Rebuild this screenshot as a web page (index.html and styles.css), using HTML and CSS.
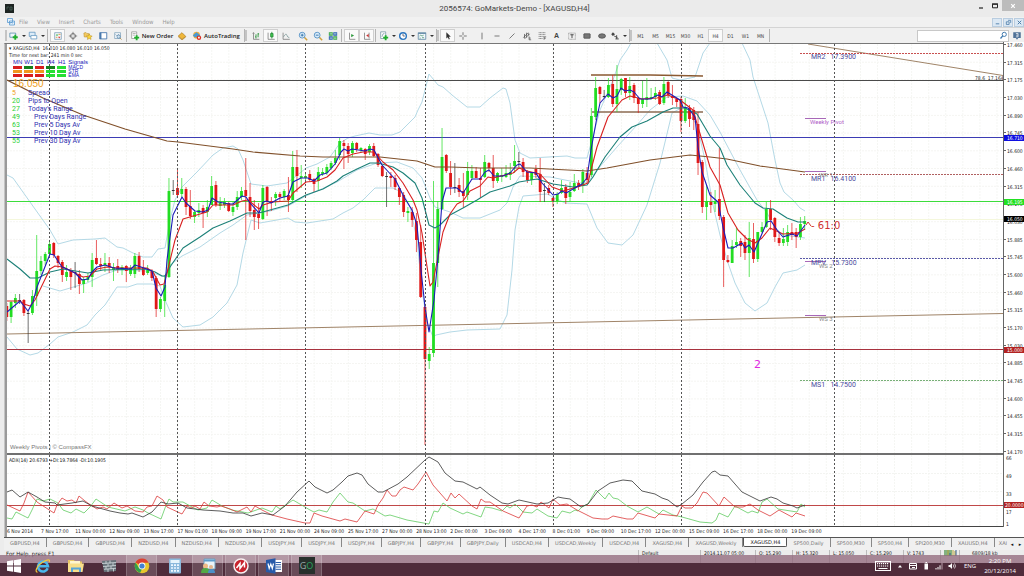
FILE: index.html
```html
<!DOCTYPE html>
<html lang="en">
<head>
<meta charset="utf-8">
<title>2056574: GoMarkets-Demo - [XAGUSD,H4]</title>
<link rel="stylesheet" href="styles.css">
</head>
<body>
<header class="titlebar">
  <svg class="app-icon" viewBox="0 0 9 9"><rect width="9" height="9" fill="#1d2422"/><path d="M2 5.500V3h2M5 3h2v3H5z" stroke="#4d6b60" stroke-width=".7" fill="none"/></svg>
  <h1 class="title">2056574: GoMarkets-Demo - [XAGUSD,H4]</h1>
  <div class="window-controls">
    <button class="win" aria-label="Minimize"><svg viewBox="0 0 8 8"><path d="M2 6h4" stroke="#222" stroke-width="1.200"/></svg></button>
    <button class="win" aria-label="Maximize"><svg viewBox="0 0 8 8"><path d="M1.500 2.200h5v3.600h-5z" stroke="#222" fill="none"/><path d="M1 2h6" stroke="#222" stroke-width="1.200"/></svg></button>
    <button class="win win-close" aria-label="Close"><svg viewBox="0 0 8 8"><path d="M2.200 2.200l3.600 3.600M5.800 2.200L2.200 5.800" stroke="#fff" stroke-width="1.200"/></svg></button>
  </div>
</header>

<nav class="menubar">
  <svg class="menu-icon" viewBox="0 0 8 8"><path d="M.5.500h5v4h-5zM2.500 3h5v4h-5z" fill="#e7f2fb" stroke="#5b9bd0" stroke-width=".8"/><path d="M3.500 5.500l1-1 1 .8 1-1" stroke="#5b9bd0" stroke-width=".6" fill="none"/></svg>
  <button class="menu">File</button><button class="menu">View</button><button class="menu">Insert</button><button class="menu">Charts</button><button class="menu">Tools</button><button class="menu">Window</button><button class="menu">Help</button>
  <div class="child-controls">
    <button class="child" aria-label="Minimize chart"><svg viewBox="0 0 8 8"><path d="M2 5.500h4" stroke="#4a7ba8"/></svg></button>
    <button class="child" aria-label="Restore chart"><svg viewBox="0 0 8 8"><path d="M3.500 1.500h3v3M1.500 3.200h3.200v3H1.500z" stroke="#4a7ba8" fill="none" stroke-width=".9"/></svg></button>
    <button class="child" aria-label="Close chart"><svg viewBox="0 0 8 8"><path d="M2 2l4 4M6 2L2 6" stroke="#4a7ba8" stroke-width="1.100"/></svg></button>
  </div>
</nav>

<div class="toolbar" role="toolbar">
  <span class="grip"></span>
  <button class="tool drop" aria-label="New chart"><svg viewBox="0 0 12 12"><path d="M1 2.500h7v5H1z" fill="#eef6fb" stroke="#4f86a8" stroke-width=".9"/><path d="M7.500 4.500v6M4.500 7.500h6" stroke="#1fae2c" stroke-width="2.200"/></svg></button>
  <button class="tool drop" aria-label="Profiles"><svg viewBox="0 0 12 12"><path d="M1.500 1.500h7v5h-7z" fill="#dcecf8" stroke="#5e95c0" stroke-width=".9"/><path d="M3.500 5.500h7v4h-7z" fill="#fff" stroke="#5e95c0" stroke-width=".9"/></svg></button>
  <span class="sep"></span>
  <button class="tool on" aria-label="Market Watch"><svg viewBox="0 0 12 12"><path d="M2 2h8v8H2z" fill="#f4f9fc" stroke="#6c93ad" stroke-width=".8"/><path d="M3.300 5.500l1.500-2 1.500 2z" fill="#1fae2c"/><path d="M6 7l1.500 2L9 7z" fill="#d33"/><path d="M6.500 4h2.500M3.300 7.500h2" stroke="#d88a2a"/></svg></button>
  <button class="tool" aria-label="Data Window"><svg viewBox="0 0 12 12"><circle cx="6" cy="6" r="3" fill="none" stroke="#666"/><path d="M6 1v4M6 7v4M1 6h4M7 6h4" stroke="#666" stroke-width=".9"/></svg></button>
  <button class="tool" aria-label="Navigator"><svg viewBox="0 0 12 12"><path d="M1 2.500l2.500-.8 1 1.200 3 .3v4H1.500z" fill="#f2c860" stroke="#b58a28" stroke-width=".6"/><path d="M7.500 3.500l1.100 2.200 2.400.3-1.700 1.700.4 2.400-2.200-1.100-2.200 1.100.4-2.400L4 6l2.400-.3z" fill="#fbd53b" stroke="#b58a28" stroke-width=".6"/></svg></button>
  <button class="tool" aria-label="Terminal"><svg viewBox="0 0 12 12"><path d="M2 2h8.500v7.500H2z" fill="#fff" stroke="#3d70a8"/><path d="M3.300 2v7.500" stroke="#3d70a8" stroke-width="1.600"/></svg></button>
  <button class="tool" aria-label="Strategy Tester"><svg viewBox="0 0 12 12"><path d="M2 2h7v7H2z" fill="#f5f9fc" stroke="#7298b3" stroke-width=".8"/><path d="M3 4l2 2 1.500-2L8 5.500" stroke="#5882a5" stroke-width=".7" fill="none"/><circle cx="6.800" cy="6.800" r="2" fill="#cfe3f2" stroke="#5882a5" stroke-width=".8"/><path d="M8.300 8.300l2 2" stroke="#b08b4a"/></svg></button>
  <span class="sep"></span>
  <button class="tool wide"><svg viewBox="0 0 12 12"><path d="M2 1h6v8H2z" fill="#fff" stroke="#888" stroke-width=".8"/><path d="M3.300 3h3.500M3.300 5h3" stroke="#888" stroke-width=".7"/><path d="M8 5v6M5 8h6" stroke="#1fae2c" stroke-width="2.200"/></svg>New Order</button>
  <button class="tool" aria-label="MetaEditor"><svg viewBox="0 0 12 12"><path d="M1.500 6L6 2l4.500 4.500L6 10z" fill="#f0b73a" stroke="#a87412" stroke-width=".8"/><path d="M1.500 7L6 10.700l4.500-3.500" stroke="#a87412" fill="none" stroke-width=".7"/></svg></button>
  <button class="tool wide auto"><svg viewBox="0 0 12 12"><circle cx="5.500" cy="5" r="4" fill="#f0b040"/><path d="M1 5l4.500-3.500L10 5l-2 2.500H3z" fill="#4a9ad0"/><circle cx="8.300" cy="8" r="2.700" fill="#dd2f22"/><path d="M7.300 7h2v2h-2z" fill="#fff"/></svg>AutoTrading</button>
  <span class="sep"></span><span class="grip"></span>
  <button class="tool" aria-label="Bar chart"><svg viewBox="0 0 12 12"><path d="M3 2v8h7M2 3l1-1 1 1" stroke="#666" fill="none" stroke-width=".8"/><path d="M6 4v5M8.500 2.500v5M5 7h1M8.500 3.500h1.200" stroke="#1d8d2e"/></svg></button>
  <button class="tool on" aria-label="Candlesticks"><svg viewBox="0 0 12 12"><path d="M2.500 2v8h8" stroke="#666" fill="none" stroke-width=".8"/><path d="M7 1v8" stroke="#1d8d2e"/><path d="M5.500 3h3v4h-3z" fill="#3fc64f" stroke="#1d7d2e" stroke-width=".8"/></svg></button>
  <button class="tool" aria-label="Line chart"><svg viewBox="0 0 12 12"><path d="M2.500 2v8h8" stroke="#666" fill="none" stroke-width=".8"/><path d="M3 7q3-5 4-2t3 3" stroke="#688" fill="none" stroke-width=".8"/></svg></button>
  <span class="space"></span>
  <button class="tool" aria-label="Zoom in"><svg viewBox="0 0 12 12"><path d="M7 7l4 4" stroke="#d0a13c" stroke-width="1.800"/><circle cx="5" cy="5" r="3.500" fill="#d9ecfa" stroke="#4d8cc2"/><path d="M5 3.300v3.400M3.300 5h3.400" stroke="#2868a0"/></svg></button>
  <button class="tool" aria-label="Zoom out"><svg viewBox="0 0 12 12"><path d="M7 7l4 4" stroke="#d0a13c" stroke-width="1.800"/><circle cx="5" cy="5" r="3.500" fill="#d9ecfa" stroke="#4d8cc2"/><path d="M3.300 5h3.400" stroke="#2868a0"/></svg></button>
  <button class="tool" aria-label="Tile windows"><svg viewBox="0 0 12 12"><path d="M1 1.500h4.700v4.200H1zM6.300 6.300H11v4.200H6.300z" fill="#3aa648"/><path d="M6.300 1.500H11v4.200H6.300zM1 6.300h4.700v4.200H1z" fill="#2c62b0"/><path d="M2 3.500h3M7.200 3.500h3M2 8.500h3M7.200 8.500h3" stroke="#dff2ea"/></svg></button>
  <span class="sep"></span>
  <button class="tool on" aria-label="Auto scroll"><svg viewBox="0 0 12 12"><path d="M3 2v8h7" stroke="#666" fill="none" stroke-width=".8"/><path d="M5 3.500v4l3.500-2z" fill="#2e9a3d"/></svg></button>
  <button class="tool on" aria-label="Chart shift"><svg viewBox="0 0 12 12"><path d="M3 2v8h7M8.500 2v7" stroke="#666" fill="none" stroke-width=".8"/><path d="M8 3.500v4L5 5.500z" fill="#c33"/></svg></button>
  <span class="sep"></span>
  <button class="tool drop" aria-label="Indicators"><svg viewBox="0 0 12 12"><path d="M2 1h6v8H2z" fill="#fff" stroke="#689" stroke-width=".8"/><path d="M3.500 7q1-5 3-4" stroke="#689" fill="none" stroke-width=".8"/><path d="M8 5v6M5 8h6" stroke="#1fae2c" stroke-width="2.200"/></svg></button>
  <button class="tool drop" aria-label="Periods"><svg viewBox="0 0 12 12"><circle cx="6" cy="6" r="4" fill="#fff" stroke="#2d77c0" stroke-width="1.700"/><path d="M6 3.300V6h2.200" stroke="#445" fill="none" stroke-width=".9"/></svg></button>
  <button class="tool drop" aria-label="Templates"><svg viewBox="0 0 12 12"><path d="M1.500 2h9v8h-9z" fill="#f2f8fc" stroke="#557f9f" stroke-width=".9"/><path d="M1.500 3h9" stroke="#557f9f"/><path d="M3 6l1.500-1 1.500 1 2-1M3 8.500h1.500M6 8h2.500" stroke="#3a8a60" fill="none" stroke-width=".8"/></svg></button>
  <span class="sep"></span><span class="grip"></span>
  <button class="tool on" aria-label="Cursor"><svg viewBox="0 0 12 12"><path d="M4 1.500v7.500l1.800-1.600 1.200 2.800 1.200-.6-1.200-2.600h2.400z" fill="#333"/></svg></button>
  <button class="tool" aria-label="Crosshair"><svg viewBox="0 0 12 12"><path d="M6 1.500v3.500M6 7v3.500M1.500 6H5M7 6h3.500" stroke="#555" stroke-width=".9"/></svg></button>
  <button class="tool gap" aria-label="Vertical line"><svg viewBox="0 0 12 12"><path d="M6 2v8" stroke="#555" stroke-width=".9"/></svg></button>
  <button class="tool" aria-label="Horizontal line"><svg viewBox="0 0 12 12"><path d="M3 6h6" stroke="#555" stroke-width=".9"/></svg></button>
  <button class="tool" aria-label="Trendline"><svg viewBox="0 0 12 12"><path d="M3 9l6-6" stroke="#555" stroke-width=".9"/></svg></button>
  <button class="tool" aria-label="Channel"><svg viewBox="0 0 12 12"><path d="M1.500 8l6-6M3 9.500l6-6M3 3.500v5M5.500 2v6M8 2.500v3M8.500 6.500v4h2.500M8.500 8.500h2" stroke="#444" stroke-width=".8" fill="none"/></svg></button>
  <button class="tool" aria-label="Fibonacci"><svg viewBox="0 0 12 12"><path d="M2 2h8M2 4.300h8M2 6.600h6M2 9h5" stroke="#555" stroke-width=".8" stroke-dasharray="1.200 .5"/><path d="M8.500 10.500V7H11M8.500 8.700h2" stroke="#444" stroke-width=".8" fill="none"/></svg></button>
  <button class="tool letter">A</button>
  <button class="tool" aria-label="Text label"><svg viewBox="0 0 12 12"><path d="M2 2.500h8v7.500H2z" fill="none" stroke="#777" stroke-width=".7" stroke-dasharray="1 .5"/><path d="M4 4.500h4M6 4.500v4" stroke="#333" stroke-width="1"/></svg></button>
  <button class="tool" aria-label="Rectangle"><svg viewBox="0 0 12 12"><rect x="2.200" y="3.300" width="7.600" height="5.400" rx=".6" fill="#777" stroke="#444" stroke-width=".8"/></svg></button>
  <button class="tool" aria-label="Ellipse"><svg viewBox="0 0 12 12"><ellipse cx="6" cy="6" rx="4.200" ry="2.700" fill="#777" stroke="#444" stroke-width=".8"/></svg></button>
  <button class="tool drop" aria-label="Arrows"><svg viewBox="0 0 12 12"><path d="M3.500 1.500L6 4 3.500 6 1.500 4z" fill="#444"/><path d="M5 6l4 2M8 5v4.500M6.500 9.500h4" stroke="#444" stroke-width="1.100"/></svg></button>
  <span class="sep"></span><span class="grip"></span>
  <button class="tool tf">M1</button><button class="tool tf">M5</button><button class="tool tf">M15</button><button class="tool tf">M30</button><button class="tool tf">H1</button><button class="tool tf on">H4</button><button class="tool tf">D1</button><button class="tool tf">W1</button><button class="tool tf">MN</button>
  <span class="sep"></span>
  <label class="search"><input type="text" aria-label="Search"><svg viewBox="0 0 12 12"><circle cx="7" cy="4.500" r="2.800" fill="#fff" stroke="#3f78ad" stroke-width="1.300"/><path d="M5 6.500L2 10" stroke="#3f78ad" stroke-width="1.700"/></svg></label>
  <button class="tool" aria-label="Messages"><svg viewBox="0 0 12 12"><path d="M1.500 1.500h9v7h-3l-1.500 2-1.500-2h-3z" fill="#4f7197"/><path d="M4.700 3h2.600v2H5M7.300 5v2H4.700" stroke="#fff" stroke-width=".8" fill="none"/></svg></button>
</div>

<main class="workspace">
  <section class="plot price" id="pricePlot">
    <svg id="priceChart" viewBox="7 44 996 409" preserveAspectRatio="none"></svg>
    <div class="info">
      <p class="quote">▾ XAGUSD,H4&nbsp; 16.010 16.080 16.010 16.050</p>
      <p class="quote">Time for next bar: 241 min 0 sec</p>
      <table class="signals">
        <tr><th>MN</th><th>W1</th><th>D1</th><th>H4</th><th>H1</th><th class="name">Signals</th></tr>
        <tr><td class="r"></td><td class="d"></td><td class="r"></td><td class="d"></td><td class="g"></td><th class="name">MACD</th></tr>
        <tr><td class="o"></td><td class="o"></td><td class="o"></td><td class="g"></td><td class="g"></td><th class="name">STR</th></tr>
        <tr><td class="r"></td><td class="r"></td><td class="r"></td><td class="g"></td><td class="g"></td><th class="name">EMA</th></tr>
      </table>
      <p class="bid">16.050</p>
      <dl class="stats">
        <dt class="warn">5</dt><dd>Spread</dd>
        <dt>20</dt><dd>Pips to Open</dd>
        <dt>27</dt><dd>Today's Range</dd>
        <dt>49</dt><dd class="sub">Prev Days Range</dd>
        <dt>63</dt><dd class="sub">Prev 5 Days Av</dd>
        <dt>53</dt><dd class="sub">Prev 10 Day Av</dd>
        <dt>55</dt><dd class="sub">Prev 30 Day Av</dd>
      </dl>
    </div>
    <p class="credit">Weekly Pivots | © CompassFX</p>
  </section>
  <aside class="axis price-axis" id="priceAxis"></aside>
  <section class="plot adx">
    <svg id="adxChart" viewBox="7 455 996 71" preserveAspectRatio="none"></svg>
    <p class="adx-title">ADX(14) 20.6793 +DI:19.7864 -DI:10.1905</p>
  </section>
  <aside class="axis adx-axis"><span>66</span><span>49</span><span>33</span><span>17</span><span>1</span><b class="tag tag-level">20.0000</b></aside>
  <div class="dates" id="dates"></div>
</main>

<nav class="tabs" id="tabs"></nav>

<footer class="status">
  <span class="help">For Help, press F1</span><span class="cell c-profile">Default</span><span class="cell c-date">2014.11.07 05:00</span><span class="cell c-num">O: 15.290</span><span class="cell c-num">H: 15.320</span><span class="cell c-num">L: 15.050</span><span class="cell c-num">C: 15.290</span><span class="cell c-num">V: 1743</span><span class="cell c-net"><svg viewBox="0 0 13 6"><path d="M1 0v6M3 0v6M5 0v6M7 0v6" stroke="#3d8a3a" stroke-width="1.200"/><path d="M4 0v6M9 0v6M11 1v5" stroke="#b5a338"/><path d="M6 3v3M12 0v6" stroke="#2f5b8c"/></svg></span><span class="cell c-kb">6809/18 kb</span>
</footer>

<div class="taskbar">
  <button class="task" aria-label="Start"><svg viewBox="0 0 16 16"><path d="M1 3.200l6-.9v5.300H1zM7.800 2.200L15 1v6.600H7.800zM1 8.400h6v5.300l-6-.9zM7.800 8.400H15V15l-7.200-1.200z" fill="#fff"/></svg></button>
  <button class="task" aria-label="Internet Explorer"><svg viewBox="0 0 16 16"><path d="M12.700 10.300A5 5 0 1 1 13 8.200H4" fill="none" stroke="#49b7ec" stroke-width="2.500"/><path d="M2.500 14C-.5 14.500 1.500 8 7 4.500S15.500 1 14.300 4" fill="none" stroke="#f3c63a" stroke-width="1.200"/></svg></button>
  <button class="task" aria-label="File Explorer"><svg viewBox="0 0 16 16"><path d="M0 2h6l1 1.500h7V14H0z" fill="#eac765"/><path d="M2 3h10v3H2z" fill="#fff6d0"/><path d="M0 5.500h16L14.500 14H0z" fill="#f8df8b"/><path d="M4 14v-3.500h8V14" fill="none" stroke="#58a6d8" stroke-width="2"/></svg></button>
  <button class="task" aria-label="Server"><svg viewBox="0 0 16 16"><path d="M1 3l14-1v11L3 14z" fill="#68737a"/><path d="M1 5.500l14-1M2 8.500l13-1M3 11.300l12-1M5 3v3M9 2.500v3M12 5v3M7 5.500v3M5 8v3M10 8v3M7 11v3M12.500 10.500v3" stroke="#c9d2d6" stroke-width=".9"/></svg></button>
  <button class="task open" aria-label="Chrome"><svg viewBox="0 0 16 16"><circle cx="8" cy="8" r="7.300" fill="#e8c62c"/><path d="M8 8L1.500 4.500A7.300 7.300 0 0 1 14.600 4.700H8z" fill="#dd4032"/><path d="M1.600 4.500L5 10l3 1-2 4A7.300 7.300 0 0 1 1.600 4.500z" fill="#35a04a"/><circle cx="8" cy="8" r="3.400" fill="#fff"/><circle cx="8" cy="8" r="2.600" fill="#4380d2"/></svg></button>
  <button class="task" aria-label="Calculator"><svg viewBox="0 0 16 16"><rect x="2" y=".5" width="12" height="15" rx="1" fill="#8bb9dc"/><path d="M3.500 2h9v3h-9z" fill="#e7f5fc"/><path d="M4 7.200h8M4 10h8M4 12.800h8" stroke="#eef8ff" stroke-width="1.700" stroke-dasharray="2 1"/></svg></button>
  <button class="task open" aria-label="Messenger"><svg viewBox="0 0 16 16"><path d="M4 1h11v10H4z" fill="#e9f3f8" stroke="#719fbd"/><path d="M4 2.500h11" stroke="#5d9ccc" stroke-width="2"/><circle cx="5.500" cy="8" r="2.500" fill="#edb985"/><path d="M1 15q0-5 4.500-5T10 15z" fill="#53a946"/><circle cx="11" cy="9" r="2" fill="#e3b58c"/><path d="M8 15q0-4 3.500-4t3.500 4z" fill="#4b8fc7"/></svg></button>
  <button class="task open" aria-label="Market app"><svg viewBox="0 0 16 16"><circle cx="8" cy="8" r="7" fill="#c7242e" stroke="#f6f0f1" stroke-width="1.500"/><path d="M3.500 10L7 5.500v5L11.500 4.500v5" stroke="#fff" stroke-width="1.500" fill="none"/></svg></button>
  <button class="task open" aria-label="Word"><svg viewBox="0 0 16 16"><path d="M7 2h9v12H7z" fill="#fff"/><path d="M9.500 4.500H15M9.500 6.700H15M9.500 9H15M9.500 11.300H15" stroke="#2b5ca8"/><path d="M0 2l9.500-1.800v15.600L0 14z" fill="#285aa8"/><path d="M2 5.500l1.200 5L4.800 6l1.500 4.500 1.200-5" stroke="#fff" stroke-width="1.200" fill="none"/></svg></button>
  <button class="task open"><span class="go"><b>G</b>O</span></button>
  <div class="tray">
    <svg class="kbd" viewBox="0 0 16 10"><rect x=".5" y=".5" width="15" height="9" fill="none" stroke="#fff"/><path d="M2 2.700h12M2 5h12" stroke="#fff" stroke-width="1.200" stroke-dasharray="1.200 .8"/><path d="M3.500 7.500h9" stroke="#fff"/></svg>
    <svg viewBox="0 0 8 8"><path d="M2 5.500L4 3l2 2.500z" fill="#fff"/></svg>
    <svg viewBox="0 0 8 8"><path d="M.5 1.500h7v5.500h-7z" fill="none" stroke="#fff"/><path d="M.5 3.500h7M3 5.500h3" stroke="#fff"/></svg>
    <svg viewBox="0 0 8 8"><path d="M2.500 1.500h3.500v6H2.500z" fill="#fff"/><path d="M3.500.5h1.500" stroke="#fff"/></svg>
    <svg viewBox="0 0 8 8"><path d="M1 6v1.500M3 5v2.500M5 3.300v4.200" stroke="#fff"/><path d="M7 1v6.500" stroke="#b99daa"/></svg>
    <svg viewBox="0 0 8 8"><path d="M.5 3h1.500l2-2v6l-2-2H.500z" fill="#fff"/><path d="M5.200 2.500q1.200 1.500 0 3M6.500 1.500q2 2.500 0 5" stroke="#fff" fill="none" stroke-width=".7"/></svg>
    <span class="lang">ENG</span>
    <time class="clock"><span>2:20 PM</span><span>20/12/2014</span></time>
  </div>
</div>
<script src="chart.js"></script>
</body>
</html>
```
FILE: styles.css
```css
* { box-sizing: border-box; }
body {
  margin: 0;
  height: 100vh;
  display: flex;
  flex-direction: column;
  overflow: hidden;
  background: #ececec;
  color: #222;
  font: 5px/8px "DejaVu Sans Condensed", "Open Sans", sans-serif;
}
p, dl, dd, h1 { margin: 0; }
svg { display: block; }
button { border: 0; padding: 0; margin: 0; background: none; font: inherit; color: inherit; }

/* title and menu */
.titlebar { flex: none; height: 17px; display: flex; align-items: center; padding-left: 5px; background: #ebebeb; }
.app-icon { width: 9px; height: 9px; }
.title { flex: 1; padding-left: 41px; text-align: center; font: 8px/16px Roboto, sans-serif; color: #444; }
.window-controls { display: flex; align-self: flex-start; }
.win { width: 14px; height: 12px; display: grid; place-items: center; }
.win svg { width: 8px; height: 8px; }
.win-close { width: 22px; height: 11px; background: #bcbcbc; }
.menubar { flex: none; height: 10px; display: flex; align-items: center; gap: 9px; padding-left: 7px; background: #f1f1f1; font-size: 6px; color: #999; }
.menu-icon { width: 8px; height: 8px; margin-right: -5px; }
.child-controls { margin-left: auto; display: flex; gap: 1px; }
.child { width: 10px; height: 9px; display: grid; place-items: center; background: #dbe8f4; border: 1px solid #b9cde0; }
.child svg { width: 7px; height: 7px; }

/* toolbar */
.toolbar { flex: none; height: 16px; display: flex; align-items: center; padding-left: 5px; background: #f0f0f0; border-top: 1px solid #d4d4d4; font-size: 5px; }
.tool { flex: none; width: 15px; height: 13px; display: flex; align-items: center; justify-content: center; color: #444; }
.tool svg { width: 10px; height: 10px; flex: none; }
.tool.on { background: #fafafa; border: 1px solid #cfcfcf; }
.tool.drop { width: 19px; }
.tool.drop::after { content: ""; margin-left: 3px; border: 2px solid transparent; border-top-color: #333; border-bottom: 0; }
.tool.wide { width: 45px; gap: 2px; font: 600 6px/8px "Open Sans", sans-serif; color: #222; }
.tool.auto { width: 54px; }
.tool.gap { margin-left: 4px; }
.tool.letter { font: bold 7px/8px "Liberation Sans", sans-serif; }
.sep { flex: none; width: 1px; height: 13px; margin: 0 2px 0 1px; background: #b5b5b5; }
.grip { flex: none; width: 2px; height: 11px; border: 1px solid #c4c4c4; border-width: 0 1px; margin-right: 1px; }
.sep + .grip { margin-left: -2px; }
.space { width: 2px; }
.search { margin-left: auto; width: 92px; height: 12px; display: flex; align-items: center; background: #fff; border: 1px solid #c8c8c8; }
.search input { flex: 1; min-width: 0; border: 0; padding: 0; font: inherit; outline: 0; }
.search svg { width: 9px; height: 9px; }

/* chart workspace */
.workspace {
  flex: 1;
  min-height: 0;
  display: grid;
  grid-template-columns: 1fr 21px;
  grid-template-rows: minmax(0, 1fr) 74px 10px;
  margin-left: 4px;
  padding-left: 2px;
  border-top: 1px solid #777;
  border-left: 1px solid #c4c4c4;
  background: linear-gradient(90deg, #9a9a9a 2px, #fff 2px);
}
.plot { position: relative; overflow: hidden; min-height: 0; background: #fff; }
.plot svg { width: 100%; height: 100%; }
.adx { border-top: 2px solid #707070; border-bottom: 1px solid #444; }
.axis { position: relative; border-left: 1px solid #666; background: #fff; font-size: 5px; line-height: 6px; color: #222; }
.price-axis { display: flex; flex-direction: column; justify-content: space-between; margin: -2px 0; z-index: 1; }
.price-axis > span, .adx-axis > span { padding-left: 2px; }
.price-axis > span::before { content: ""; display: inline-block; width: 2px; height: 1px; margin: 0 1px 2px -2px; background: #666; }
.adx-axis { display: grid; grid-template-rows: 18px 18px 18px 12px 6px; padding-top: 2px; }
.tag { position: absolute; left: 0; right: 0; height: 6px; transform: translateY(-50%); padding-left: 3px; font-weight: normal; color: #fff; overflow: hidden; }
.tag-blue { background: #1010e0; }
.tag-green { background: #22e022; }
.tag-black { background: #000; }
.tag-red, .tag-level { background: #b22222; }
.tag-level { top: 52px; padding-left: 1px; }
.dates { grid-column: 1 / -1; display: grid; grid-template-columns: repeat(24, 34fr) 198fr; line-height: 9px; white-space: nowrap; color: #222; }
.dates span { width: 0; }

/* chart overlays */
.info { position: absolute; left: 2px; top: 1px; color: #3030b0; font: 7px/8px Roboto, sans-serif; }
.quote { color: #222; font: 5px/7px "DejaVu Sans Condensed", "Open Sans", sans-serif; white-space: nowrap; }
.signals { border-spacing: 2px 1px; margin-left: 2px; font: 5px/3px "Liberation Sans", sans-serif; color: #2222bb; }
.signals th, .signals td { padding: 0; width: 9px; height: 3px; font-weight: normal; }
.signals tr:first-child th { height: 5px; font-size: 6px; }
.signals .name { text-align: left; width: auto; }
.signals .r { background: #d81e1e; }
.signals .d { background: #14801c; }
.signals .g { background: #26df33; }
.signals .o { background: #f0981e; }
.bid { font: 10px/11px "Liberation Sans", sans-serif; color: #f0a020; padding-left: 4px; }
.stats { display: grid; grid-template-columns: 16px auto; padding-left: 3px; }
.stats dt { color: #2bd135; }
.stats .warn { color: #f0a020; }
.stats .sub { padding-left: 6px; }
.credit { position: absolute; left: 3px; bottom: 2px; font: 6px/8px "Liberation Sans", sans-serif; color: #777; }
.adx-title { position: absolute; left: 2px; top: 1px; font-size: 5px; color: #111; }
.note { position: absolute; transform: translateY(-50%); white-space: pre; font: 7px/8px Roboto, sans-serif; color: #4a4a9c; }
.note-violet { color: #b060c8; font-size: 6px; }
.note-gray { color: #888; font-size: 6px; }
.note-count { color: #d03030; font: 10px/10px "DejaVu Sans", sans-serif; }
.note-magenta { color: #e02ae0; font: 11px/12px "DejaVu Sans", sans-serif; }
.note-fibo { color: #222; font: 5px/6px "DejaVu Sans Condensed", sans-serif; }

/* tabs and status */
.tabs { flex: none; height: 13px; margin-left: 4px; display: flex; border-top: 1px solid #555; background: #f0f0f0; color: #777; overflow: hidden; font: 5px/8px "DejaVu Sans", sans-serif; }
.tab { flex: 1 0 auto; height: 9px; padding: 0 4px; border-right: 1px solid #888; line-height: 8px; }
.tab.active { height: 10px; margin-top: -1px; background: #fff; color: #111; border: 1px solid #555; border-top: 0; border-radius: 0 0 2px 2px; }
.tab.cut { padding-right: 1px; border: 0; flex: none; }
.tab-arrow { width: 8px; flex: none; color: #111; line-height: 8px; }
.status { flex: none; height: 13px; display: flex; padding-left: 6px; line-height: 7px; font-size: 5px; }
.help { flex: 1; font-size: 6px; }
.cell { border-left: 1px solid #bbb; padding-left: 3px; }
.c-profile { width: 62px; }
.c-date { width: 55px; }
.c-num { width: 37px; }
.c-net { width: 19px; }
.c-net svg { width: 13px; height: 6px; }
.c-kb { width: 65px; padding-left: 12px; }

/* taskbar */
.taskbar {
  flex: none;
  height: 21px;
  margin-top: -8px;
  position: relative;
  display: flex;
  padding-right: 8px;
  background: linear-gradient(rgba(146, 106, 125, .78) 8px, #4f2c3b 8px);
}
.task { flex: none; width: 31px; margin-right: 2px; display: grid; place-items: center; }
.task:first-child { width: 27px; margin-right: 0; }
.task svg { width: 16px; height: 16px; }
.task.open { background: rgba(255, 255, 255, .15); border: 1px solid rgba(255, 255, 255, .18); border-width: 0 1px; }
.go { width: 16px; height: 17px; font: 9px/17px "Open Sans", sans-serif; color: #2aa260; background: #27302c; }
.go b { font-weight: normal; color: #9aa; }
.tray { margin-left: auto; display: flex; align-items: center; gap: 5px; color: #fff; font: 6px/10px "Open Sans", sans-serif; }
.tray svg { width: 8px; height: 8px; }
.tray .kbd { width: 16px; height: 10px; }
.lang { margin-left: 3px; }
.clock { margin-left: 3px; display: flex; flex-direction: column; text-align: center; }
```
FILE: chart.js
```js
const STEP = 4.2667;
const FIRST = 6.83;

// Each candle: high, body top, body bottom, low, colour
const candles = `303,306,317,321r 301,302,317,323g 294,298,303,308g 294,300,300,304k 299,300,313,316r 311,313,313,343k 290,296,313,315g 235,271,296,306g 256,261,271,275g 252,254,261,265g
240,244,254,255g 242,243,255,258r 255,256,263,268r 260,262,275,282r 265,272,277,281g 268,271,277,290r 262,272,272,288k 270,274,284,294r 277,279,284,293g 273,277,280,282g
253,260,277,287g 240,258,264,265r 258,264,266,270r 253,263,265,272g 257,263,267,273r 263,267,270,281g 259,266,270,273r 265,267,270,275g 265,266,271,282r 265,268,274,276g
253,256,274,278g 252,256,269,272r 260,268,275,276r 265,270,273,275g 269,271,278,281r 276,278,309,317r 297,299,309,312g 275,285,301,317g 178,191,277,278g 180,190,190,195k
169,188,195,196r 178,189,194,197g 187,189,207,215r 190,206,216,219r 210,212,217,223g 203,210,213,217g 205,208,213,228r 200,207,212,217g 176,186,205,205g 181,185,205,207r
197,203,206,210g 198,202,205,208g 202,203,211,212r 202,207,212,216g 191,197,207,210g 187,191,197,200g 158,190,196,240r 183,197,211,217r 200,210,217,230r 203,214,218,229r
185,188,219,220g 186,187,202,216r 197,201,203,211r 192,194,198,206g 192,194,197,202r 189,191,197,200g 177,195,200,212r 151,167,200,201g 150,167,176,192r 165,176,178,188g
172,176,178,182g 170,174,180,181r 178,179,184,192r 167,172,181,190g 168,172,174,176g 164,167,173,175g 161,163,168,170g 150,158,163,165g 138,141,155,160g 140,143,146,169r
143,146,154,163r 141,143,153,157g 142,143,149,152r 147,148,150,153g 148,149,154,160r 144,146,152,155g 143,146,156,157r 153,154,165,167r 165,166,176,177r 172,176,176,207k
172,176,178,187r 175,178,187,190r 187,188,197,205r 192,195,212,217r 207,211,213,222g 207,212,220,227r 213,221,240,252r 225,242,297,298r 306,307,359,445r 347,354,361,369g
181,263,353,357g 201,209,263,287g 128,157,209,210g 154,155,171,173r 161,173,187,195r 163,187,187,193k 178,185,192,197r 173,191,196,208r 162,171,195,200g 165,171,178,180g
167,171,178,178r 168,178,180,198r 155,162,177,178g 162,163,168,172r 155,168,181,188r 172,173,181,183g 168,175,177,182g 165,173,177,178g 163,172,175,180g 145,161,166,173g
152,161,161,167k 158,162,172,177r 170,172,180,183r 172,173,180,185g 165,169,175,178r 158,174,192,202r 183,190,190,202k 185,188,193,195r 197,198,201,207r 192,194,201,204g
180,188,193,194g 184,187,198,204r 182,192,197,202g 174,183,191,192g 180,183,187,190r 169,172,185,193g 167,173,180,183r 108,116,175,177g 77,88,117,120g 86,87,94,103r
90,96,97,98k 78,85,97,98g 75,84,104,107r 65,89,104,112g 78,79,90,95g 78,78,93,97r 77,86,93,100g 83,85,98,103r 97,98,104,113r 81,99,104,108g
78,97,100,107g 88,97,99,100g 87,93,97,100g 90,92,104,105r 77,84,103,105g 81,82,95,98r 85,96,98,105r 98,99,102,107r 97,99,121,132r 98,107,121,123g
105,108,119,127r 107,110,120,130r 112,124,163,175r 160,162,207,213r 185,201,207,220g 192,202,205,213r 190,201,204,212g 148,199,216,220r 215,217,260,287r 255,260,262,263r
240,246,263,263g 228,242,245,248g 238,241,246,257r 235,242,253,260r 222,238,253,277g 223,239,259,263r 232,232,259,262g 222,227,232,233g 202,209,227,228g 200,209,220,230r
217,218,237,242r 232,238,243,246r 228,239,243,246g 225,232,242,246g 223,232,235,240r 228,232,237,248r 217,224,237,240g 216,221,224,230g`.split(/\s+/);

const fast = "7,312 20,301 28,311 33,302 37,287 50,254 54,255 62,267 67,269 75,273 82,280 88,279 92,272 97,267 105,265 114,268 131,269 135,265 144,268 152,271 156,288 161,296 165,287 167,260 173,215 182,197 186,203 195,211 203,212 208,210 212,198 218,202 229,204 233,204 242,196 246,197 250,203 259,213 263,202 267,201 271,203 280,198 288,196 293,182 301,178 308,178 314,181 320,175 327,173 335,164 341,152 344,149 348,151 352,149 365,151 370,149 374,150 382,165 395,179 404,197 412,210 417,225 421,270 425,307 429,332 434,300 438,257 442,202 446,188 457,188 463,193 472,179 480,179 485,172 489,170 494,176 503,176 510,173 517,165 520,164 527,172 536,173 542,183 553,195 558,194 562,191 566,193 582,184 587,178 591,150 597,117 600,103 608,94 613,98 617,96 621,88 625,91 630,90 634,92 640,99 650,99 658,95 662,97 667,92 680,100 683,107 688,108 695,117 698,147 702,172 710,195 718,202 723,227 728,248 733,248 742,243 745,248 749,245 754,252 758,243 767,222 771,221 777,230 783,237 792,234 797,236 805,225";
const slow = "7,301 20,301 24,304 30,306 35,300 50,269 55,266 63,267 75,273 83,277 90,276 97,269 107,267 117,268 147,268 153,272 160,285 164,284 167,273 175,240 183,219 200,214 207,212 213,205 233,205 242,201 248,200 259,209 263,205 273,202 288,201 293,193 306,182 317,181 327,177 335,170 343,158 353,154 363,152 374,152 383,162 393,170 403,183 413,200 417,210 422,233 426,260 430,286 433,282 438,257 443,232 450,214 457,204 463,201 470,191 480,186 488,177 493,178 513,173 519,168 527,171 540,174 552,187 563,191 577,187 588,183 591,170 597,147 608,117 622,100 630,96 642,99 657,98 668,95 680,100 693,110 698,127 710,167 720,185 728,213 738,230 747,239 755,243 762,238 770,228 783,234 798,233 805,229";
const trend = "7,259 20,269 30,278 38,278 50,272 63,269 88,273 103,270 147,269 155,272 162,276 165,276 170,267 183,248 200,237 213,228 230,221 247,213 259,213 270,210 288,205 306,195 323,189 337,181 343,176 357,169 370,163 378,163 393,167 403,173 415,183 422,198 429,225 435,228 440,225 450,215 463,208 477,200 490,192 510,186 519,182 537,179 553,184 573,187 587,185 593,177 605,157 620,137 632,127 647,121 663,112 673,108 685,108 697,114 710,136 720,148 727,165 740,185 755,203 763,208 773,209 787,218 798,222 805,222";
const longMa = "7,80 43,98 83,115 125,129 167,141 178,142 233,149 253,152 300,156 323,157 380,157 417,161 435,167 450,167 480,168 530,168 587,171 607,168 650,160 690,155 710,157 727,159 760,166 805,172";
const bands = [
  "7,175 13,178 30,202 50,230 58,244 73,240 95,239 105,238 117,247 123,248 133,253 143,257 152,257 158,249 165,248 170,220 175,200 182,187 197,172 213,155 223,148 233,146 238,149 243,160 251,184 267,186 287,183 300,173 306,168 317,164 330,157 340,143 348,138 355,136 369,133 380,135 392,135 400,132 407,125 415,117 418,110 422,102 429,74 438,85 443,87 452,95 467,107 480,107 490,98 503,88 506,89 510,103 515,140 520,153 530,158 567,156 575,158 587,158 592,140 600,110 613,80 620,60 627,50 631,43",
  "657,43 667,60 672,78 680,80 695,77 703,53 710,43",
  "742,43 750,60 753,77 768,123 775,160 780,183 784,192 793,200 800,208 805,211",
  "43,286 60,291 87,283 103,275 117,270 147,271 165,277 170,265 182,256 200,247 220,233 233,225 247,215 270,211 288,206 306,196 337,182 357,170 377,163 397,162 413,168 422,178 430,198 435,207 450,212 463,218 480,218 500,210 507,203 513,187 520,176 550,177 580,183 588,182 597,170 617,147 637,125 650,110 667,97 683,96 697,101 710,115 720,132 740,170 757,200 767,213 775,227 783,235 805,238",
  "7,337 17,349 30,355 38,353 50,344 58,337 73,332 87,325 95,315 105,305 117,287 128,287 137,284 152,284 160,286 165,300 173,318 183,327 200,325 213,317 227,303 237,285 243,253 251,220 260,223 288,218 295,222 307,223 333,219 343,213 353,208 363,200 375,188 393,188 403,193 410,207 417,240 422,290 427,322 433,337 436,335 450,332 467,330 500,329 507,315 512,270 515,230 519,207 523,196 547,194 565,203 587,204 597,228 608,243 622,245 633,235 647,205 660,163 672,113 683,107 697,125 705,160 713,205 720,235 728,263 735,283 745,303 755,311 767,303 775,287 783,273 797,270 805,265"
];
const adx = "7,492 12,490 20,497 28,492 37,497 45,502 55,503 57,505 72,503 83,501 92,506 110,511 120,513 128,514 132,513 143,517 152,512 161,502 168,504 178,503 187,508 203,510 220,511 233,513 243,513 251,516 262,513 273,515 285,506 297,492 309,481 315,487 327,493 333,490 342,482 348,476 357,473 362,475 368,484 378,492 383,492 398,484 407,477 425,460 429,457 438,462 445,473 455,481 463,482 477,489 480,487 490,495 502,503 508,504 519,500 537,504 548,503 558,497 563,498 570,499 581,507 588,504 598,491 610,483 623,480 632,481 642,491 655,494 662,498 668,500 677,507 682,504 693,495 703,482 712,472 715,471 720,475 728,476 742,492 750,496 760,501 771,497 777,499 783,503 793,506 797,508 805,505";
const minusDi = "7,505 20,511 24,503 28,492 37,502 54,513 57,505 62,498 67,501 72,500 76,503 79,496 85,501 92,506 97,509 103,507 107,509 114,503 122,508 127,506 135,511 143,512 147,507 152,506 157,496 163,500 167,507 182,514 187,506 191,508 195,506 200,509 204,502 209,506 217,507 221,506 230,509 237,512 247,507 251,512 255,506 262,510 272,515 287,519 305,523 310,523 314,513 322,516 340,521 345,519 357,522 365,511 374,514 378,505 383,498 387,490 392,496 396,496 400,490 404,487 413,490 418,484 426,472 433,485 447,501 451,493 455,498 459,494 472,506 477,509 481,499 485,502 490,502 503,511 519,518 527,506 532,505 537,507 541,502 549,508 553,499 560,505 567,504 577,510 593,518 602,519 608,519 613,516 627,519 633,519 638,513 655,518 659,514 677,516 682,506 685,508 692,508 697,503 703,492 707,493 719,506 724,497 735,507 743,507 750,504 758,510 770,516 779,510 792,517 796,513 805,516";
const plusDi = "7,518 12,519 16,512 28,518 32,510 37,499 43,501 50,499 58,503 63,510 71,513 76,509 84,513 90,507 96,499 108,507 125,511 135,507 143,510 148,513 161,519 165,508 169,499 173,502 183,502 192,507 198,510 207,508 212,500 222,506 232,510 248,513 262,508 272,512 276,506 280,509 293,500 310,510 314,512 319,510 327,512 333,502 340,493 348,502 353,503 365,511 373,509 385,516 390,515 407,520 429,524 434,511 438,512 443,503 450,508 463,514 467,512 481,517 485,507 492,508 502,511 507,506 510,508 515,504 523,512 532,513 537,509 548,516 557,518 562,511 570,513 575,510 578,511 582,507 588,504 596,490 605,499 609,493 613,498 618,499 627,506 638,512 647,507 659,514 663,510 673,515 682,517 700,522 712,523 716,520 719,513 728,517 735,506 748,513 752,511 758,513 762,502 767,499 778,509 797,512 801,504 805,507";

const line = (pts, color, w = 1, dash = "none") =>
  `<polyline points="${pts}" fill="none" stroke="${color}" stroke-width="${w}" stroke-dasharray="${dash}" stroke-linejoin="round"/>`;
const level = (x, y, color) => `<rect x="${x}" y="${y}" width="${1003 - x}" height="1" fill="${color}"/>`;
const weeks = [49.5, 177.5, 305.5, 425.5, 553.5, 681.5, 834.5];

function grid(top, bottom) {
  let out = "";
  for (let x = 24; x < 1003; x += 17.07) out += line(`${x},${top} ${x},${bottom}`, "#f5f6f3", 1, "2 1");
  return out;
}
const weekLines = (top, bottom) => weeks.map(x => line(`${x},${top} ${x},${bottom}`, "#555", 1, "2 2")).join("");

let price = grid(44, 453);
for (let i = 1; i < 23; i++) {
  const y = 44.5 + i * 17.72;
  price += line(`7,${y} 1003,${y}`, "#f5f5f2", 1, "2 1");
}
price += level(7, 219, "#f4f7dc");
price += bands.map(b => line(b, "#b4d9e6")).join("");
price += level(7, 80, "#4a4a4a") + level(7, 137, "#3c3cb4") + level(7, 201, "#3cdc3c") + level(7, 349, "#a8323e");
price += line("7,334 1003,313.5", "#a08468") + line("808,44 1003,75.5", "#a08468");
price += line("591,75 650,75 703,76", "#8b5a32", 1.6) + line("592,112 703,112", "#8b6a50", 1.6);
price += line("800,53.5 1003,53.5", "#c85050", 1, "2 1") + line("800,174.5 1003,174.5", "#b06060", 1, "2 1") + line("800,258.5 1003,258.5", "#5a5aa8", 1, "2 1") + line("800,380.5 1003,380.5", "#78b078", 1, "2 1");
for (const y of [118.5, 171.5, 261.5, 315.5]) price += line(`805,${y} 826,${y}`, "#a868b8");
const tones = { r: "#e01818", g: "#22dd22", k: "#333" };
candles.forEach((row, i) => {
  const tone = tones[row.slice(-1)];
  const [hi, top, bottom, lo] = row.slice(0, -1).split(",").map(Number);
  const x = FIRST + i * STEP;
  price += `<path d="M${x} ${hi}V${lo}" stroke="${tone}" stroke-width=".7"/><rect x="${x - 1.4}" y="${top}" width="2.8" height="${Math.max(bottom - top, 1)}" fill="${tone}"/>`;
});
price += line(longMa, "#80502a", 1.2) + line(trend, "#1c8078", 1.1) + line(slow, "#d82020", 1.1) + line(fast, "#1c1cb8", 1.1);
price += line("806,225 808,222 811,226", "#d03030") + weekLines(44, 453);
document.getElementById("priceChart").innerHTML = price;

document.getElementById("adxChart").innerHTML =
  grid(455, 526) + line("7,473.5 1003,473.5", "#f3f4f1", 1, "2 1") + line("7,491.5 1003,491.5", "#f3f4f1", 1, "2 1") +
  level(7, 505, "#c04848") + line(plusDi, "#62cc62", 0.8) + line(minusDi, "#dc3a3a", 0.8) + line(adx, "#333", 0.8) + weekLines(455, 526);

const notes = [
  [811, 57.5, "MR2   17.3900", ""], [811, 178.5, "MR1   16.4100", ""], [811, 263, "MPV   15.7300", ""], [811, 384.5, "MS1   14.7500", ""],
  [810, 121.5, "Weekly Pivot", "note-violet"], [819, 175, "WR 1", "note-gray"], [819, 265.5, "WS 2", "note-gray"], [819, 319, "WS 3", "note-gray"],
  [811, 225.5, "- 61:0", "note-count"], [754, 365, "2", "note-magenta"], [975, 77.5, "78.6  17.164", "note-fibo"]
];
const plot = document.getElementById("pricePlot");
for (const [x, y, text, kind] of notes) {
  const el = document.createElement("span");
  el.className = `note ${kind}`;
  el.textContent = text;
  el.style.left = `${(x - 7) / 9.96}%`;
  el.style.top = `${(y - 44) / 4.09}%`;
  plot.append(el);
}

const axis = document.getElementById("priceAxis");
axis.innerHTML = "17.460 17.315 17.175 17.030 16.890 16.745 16.600 16.460 16.315 16.175 16.030 15.885 15.745 15.600 15.460 15.315 15.170 15.030 14.885 14.745 14.600 14.455 14.315 14.170"
  .split(" ").map(v => `<span>${v}</span>`).join("");
for (const [y, text, kind] of [[137.5, "16.710", "blue"], [201.5, "16.195", "green"], [219, "16.050", "black"], [349.5, "15.000", "red"]])
  axis.insertAdjacentHTML("beforeend", `<b class="tag tag-${kind}" style="top:${(y - 42) / 4.13}%">${text}</b>`);

document.getElementById("dates").innerHTML = "6 Nov 2014|7 Nov 17:00|11 Nov 00:00|12 Nov 09:00|13 Nov 17:00|17 Nov 01:00|18 Nov 09:00|19 Nov 17:00|21 Nov 00:00|24 Nov 09:00|25 Nov 17:00|27 Nov 00:00|28 Nov 13:00|2 Dec 00:00|3 Dec 09:00|4 Dec 17:00|8 Dec 01:00|9 Dec 09:00|10 Dec 17:00|12 Dec 00:00|15 Dec 09:00|16 Dec 17:00|18 Dec 00:00|19 Dec 09:00"
  .split("|").map(d => `<span>${d}</span>`).join("");

const names = "GBPUSD,H4 GBPUSD,H4 GBPUSD,H4 NZDUSD,H4 NZDUSD,H4 NZDUSD,H4 USDJPY,H4 USDJPY,H4 USDJPY,H4 GBPJPY,H4 GBPJPY,H4 GBPJPY,Daily USDCAD,H4 USDCAD,Weekly USDCAD,H4 XAGUSD,H4 XAGUSD,Weekly XAGUSD,H4 SP500,Daily SP500,M30 SP500,H4 SPI200,M30 XAUUSD,H4".split(" ");
document.getElementById("tabs").innerHTML = names.map((n, i) => `<button class="tab${i === 17 ? " active" : ""}">${n}</button>`).join("") +
  `<button class="tab cut">XAI</button><button class="tab-arrow" aria-label="Previous tabs">◂</button><button class="tab-arrow" aria-label="Next tabs">▸</button>`;
```
